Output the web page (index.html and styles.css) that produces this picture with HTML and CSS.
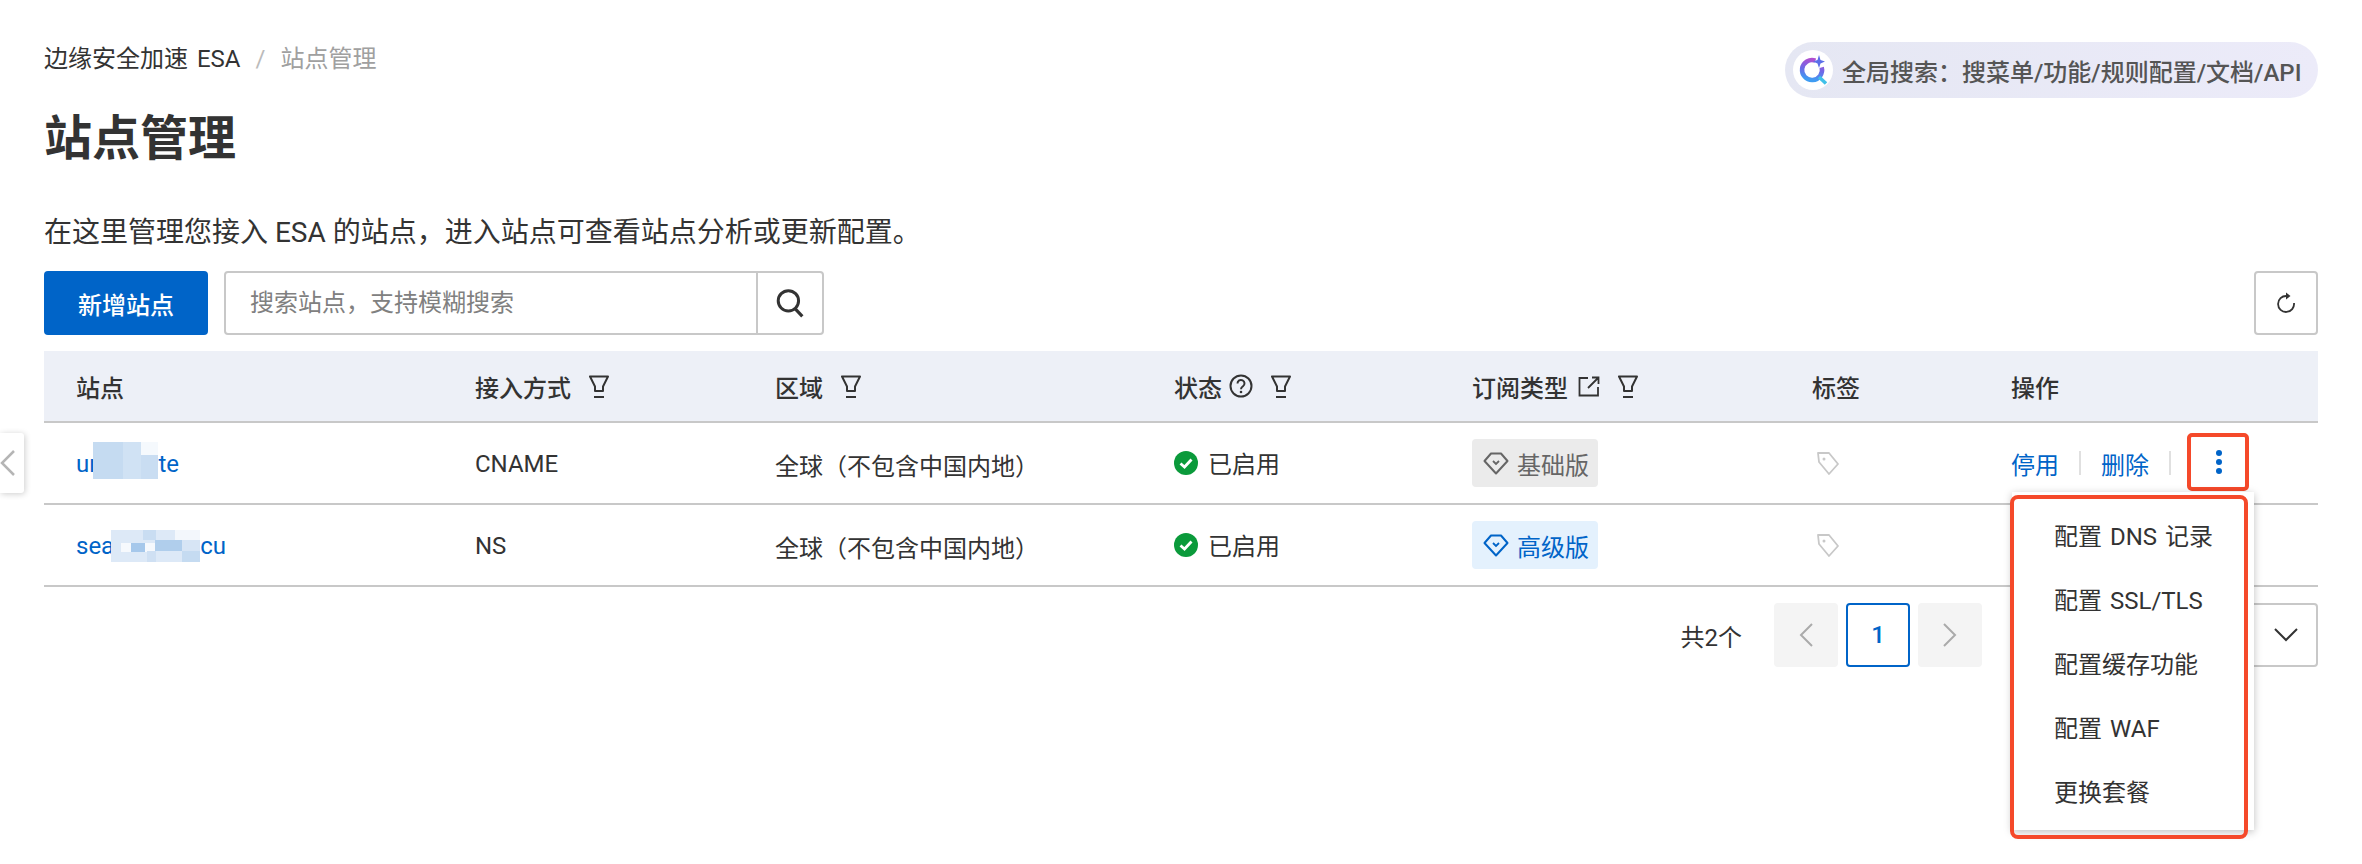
FILE: index.html
```html
<!DOCTYPE html>
<html>
	<head>
		<meta charset="utf-8">
		<title>站点管理</title>
		<link rel="stylesheet" href="styles.css">
	</head>
	<body>
		<svg class="sprite" xmlns="http://www.w3.org/2000/svg">
			<symbol id="i-filter" viewBox="0 0 20 23">
				<path d="M1 1.500h18l-5 10V16H6v-4.500z" fill="none" stroke="currentColor" stroke-width="2" stroke-linejoin="round"/>
				<path d="M5 22h10" fill="none" stroke="currentColor" stroke-width="2"/>
			</symbol>
			<symbol id="i-tag" viewBox="0 0 24 24">
				<path d="M2 2h11l9 11-9 10L3 11z" fill="none" stroke="currentColor" stroke-width="1.800" stroke-linejoin="round"/>
				<circle cx="8" cy="8" r="1.500" fill="currentColor"/>
			</symbol>
			<symbol id="i-gem" viewBox="0 0 26 23">
				<path d="M8 1.500h10l6.500 7.500L13 21.500 1.500 9z" fill="none" stroke="currentColor" stroke-width="2" stroke-linejoin="round"/>
				<path d="M10 9l3 3 3-3" fill="none" stroke="currentColor" stroke-width="1.800"/>
			</symbol>
			<symbol id="i-check" viewBox="0 0 24 24">
				<circle cx="12" cy="12" r="12" fill="#0b9a3b"/>
				<path d="M6.500 12.500l4 3.500 7-7.500" fill="none" stroke="#fff" stroke-width="2.800"/>
			</symbol>
		</svg>

		<div class="handle">
			<svg width="16" height="26" viewBox="0 0 16 26"><path d="M14 1L2 13l12 12" fill="none" stroke="#b5b5b5" stroke-width="2.500"/></svg>
		</div>

		<div class="page">
			<div class="topbar">
				<div class="crumbs">
					<span>边缘安全加速 ESA</span>
					<i>/</i>
					<span class="crumb-now">站点管理</span>
				</div>
				<div class="global-search">
					<span class="logo">
						<svg width="32" height="32" viewBox="0 0 32 32">
							<defs>
								<linearGradient id="ring" x1="0.700" y1="0" x2="0.500" y2="1">
									<stop offset="0" stop-color="#b04fd0"/>
									<stop offset="0.500" stop-color="#6f68e6"/>
									<stop offset="1" stop-color="#3f9cf2"/>
								</linearGradient>
							</defs>
							<path d="M18.400 6.600A10 10 0 1 0 24.700 13.400" fill="none" stroke="url(#ring)" stroke-width="4.500"/>
							<path d="M22 1l1.500 5 4.500 1.500-4.500 2L22 14l-1.500-4.500L16 7.500l4.500-1.500z" fill="#5b6ee8"/>
							<path d="M22 23l7 6.500" fill="none" stroke="#3fc0e8" stroke-width="3.500"/>
						</svg>
					</span>
					<span>全局搜索：搜菜单/功能/规则配置/文档/API</span>
				</div>
			</div>

			<h1>站点管理</h1>
			<p class="desc">在这里管理您接入 ESA 的站点，进入站点可查看站点分析或更新配置。</p>

			<div class="toolbar">
				<button class="btn-primary">新增站点</button>
				<div class="search">
					<input type="text" placeholder="搜索站点，支持模糊搜索">
					<button>
						<svg width="30" height="30" viewBox="0 0 28 28"><circle cx="12.500" cy="12" r="9.500" fill="none" stroke="#333" stroke-width="2.800"/><path d="M18.500 19l7 7.500" fill="none" stroke="#333" stroke-width="3"/></svg>
					</button>
				</div>
				<button class="btn-refresh">
					<svg width="20" height="22" viewBox="0 0 20 22"><path d="M10.500 4A8 8 0 1 0 18 11" fill="none" stroke="#333" stroke-width="1.800"/><path d="M10 0.500L14.500 4 10 7.500z" fill="#333"/></svg>
				</button>
			</div>

			<table class="sites">
				<thead>
					<tr>
						<th class="c-site">站点</th>
						<th class="c-mode"><span class="th-in">接入方式<svg class="ic-filter"><use href="#i-filter"/></svg></span></th>
						<th class="c-area"><span class="th-in">区域<svg class="ic-filter"><use href="#i-filter"/></svg></span></th>
						<th class="c-state">
							<span class="th-in">状态
								<svg class="ic-help" viewBox="0 0 24 24"><circle cx="12" cy="12" r="10.500" fill="none" stroke="currentColor" stroke-width="2"/><path d="M8.500 9.500a3.500 3.500 0 1 1 5.500 2.800c-1.300.9-2 1.500-2 3" fill="none" stroke="currentColor" stroke-width="2"/><circle cx="12" cy="18" r="1.300" fill="currentColor"/></svg>
								<svg class="ic-filter"><use href="#i-filter"/></svg>
							</span>
						</th>
						<th class="c-plan">
							<span class="th-in">订阅类型
								<svg class="ic-ext" viewBox="0 0 22 21"><path d="M10 2H1.500v17.500H20V11" fill="none" stroke="currentColor" stroke-width="1.800"/><path d="M10 12L20 2M14 1.500h6.500V8" fill="none" stroke="currentColor" stroke-width="1.800"/></svg>
								<svg class="ic-filter"><use href="#i-filter"/></svg>
							</span>
						</th>
						<th class="c-tag">标签</th>
						<th class="c-act">操作</th>
					</tr>
				</thead>
				<tbody>
					<tr>
						<td class="t"><a class="site-link" href="javascript:;">ur<svg class="mosaic m1" viewBox="0 0 65 37"><rect width="30" height="37" fill="#c5dbf1"/><rect x="30" width="18" height="37" fill="#d0e2f4"/><rect x="48" width="17" height="13" fill="#f5f9fd"/><rect x="48" y="13" width="17" height="24" fill="#c9ddf2"/></svg>te</a></td>
						<td class="t">CNAME</td>
						<td class="t">全球（不包含中国内地）</td>
						<td><span class="state"><svg class="ic-check"><use href="#i-check"/></svg>已启用</span></td>
						<td><span class="plan plan-base"><svg class="ic-gem"><use href="#i-gem"/></svg>基础版</span></td>
						<td><svg class="ic-tag"><use href="#i-tag"/></svg></td>
						<td>
							<div class="actions">
								<a href="javascript:;">停用</a>
								<i></i>
								<a href="javascript:;">删除</a>
								<i></i>
								<div class="more">
									<b></b><b></b><b></b>
									<div class="menu">
										<div class="menu-mark"></div>
										<div class="menu-item">配置 DNS 记录</div>
										<div class="menu-item">配置 SSL/TLS</div>
										<div class="menu-item">配置缓存功能</div>
										<div class="menu-item">配置 WAF</div>
										<div class="menu-item">更换套餐</div>
									</div>
								</div>
							</div>
						</td>
					</tr>
					<tr>
						<td class="t"><a class="site-link" href="javascript:;">sea<svg class="mosaic m2" viewBox="0 0 89 32"><rect width="89" height="32" fill="#dde9f7"/><rect x="32" width="13" height="10" fill="#c9ddf2"/><rect x="64" width="25" height="10" fill="#f3f7fc"/><rect x="10" y="13" width="10" height="9" fill="#f6f9fd"/><rect x="20" y="13" width="14" height="9" fill="#a6c8eb"/><rect x="34" y="13" width="10" height="9" fill="#f6f9fd"/><rect x="44" y="10" width="27" height="11" fill="#b0ceec"/><rect x="71" y="10" width="18" height="11" fill="#d7e5f5"/><rect x="71" y="21" width="18" height="11" fill="#c5dbf1"/><rect x="36" y="21" width="9" height="11" fill="#cfe0f3"/></svg>cu</a></td>
						<td class="t">NS</td>
						<td class="t">全球（不包含中国内地）</td>
						<td><span class="state"><svg class="ic-check"><use href="#i-check"/></svg>已启用</span></td>
						<td><span class="plan plan-pro"><svg class="ic-gem"><use href="#i-gem"/></svg>高级版</span></td>
						<td><svg class="ic-tag"><use href="#i-tag"/></svg></td>
						<td></td>
					</tr>
				</tbody>
			</table>

			<div class="pager">
				<span class="total">共2个</span>
				<span class="pg pg-off">
					<svg width="14" height="24" viewBox="0 0 14 24"><path d="M13 1L2 12l11 11" fill="none" stroke="#aaa" stroke-width="2"/></svg>
				</span>
				<span class="pg pg-on">1</span>
				<span class="pg pg-off">
					<svg width="14" height="24" viewBox="0 0 14 24"><path d="M1 1l11 11L1 23" fill="none" stroke="#aaa" stroke-width="2"/></svg>
				</span>
				<span class="size-select">
					<svg width="24" height="14" viewBox="0 0 24 14"><path d="M1 1l11 11L23 1" fill="none" stroke="#333" stroke-width="2"/></svg>
				</span>
			</div>
		</div>
	</body>
</html>
```

FILE: styles.css
```css
*{
	margin: 0;
	padding: 0;
	box-sizing: border-box;
}
html,body{
	height: 100%;
}
body{
	min-height: 864px;
	background: #fff;
	color: #333;
	font-family: Roboto, "Noto Sans CJK SC", sans-serif;
	font-size: 24px;
}
a{
	color: #0064c8;
	text-decoration: none;
}
button{
	font-family: inherit;
	cursor: pointer;
}
.sprite{
	display: none;
}
.handle{
	position: absolute;
	left: 0;
	top: 433px;
	width: 24px;
	height: 60px;
	display: flex;
	align-items: center;
	background: #fff;
	border-radius: 0 3px 3px 0;
	box-shadow: 1px 1px 6px rgba(0,0,0,.2);
}
.page{
	min-height: 864px;
	padding: 42px 44px 0;
}
.topbar{
	display: flex;
	justify-content: space-between;
	align-items: flex-start;
}
.crumbs{
	display: flex;
	margin-top: 1px;
	line-height: 32px;
	word-spacing: 3px;
}
.crumbs i{
	margin: 0 15px;
	font-style: normal;
	color: #bbb;
}
.crumb-now{
	color: #a0a0a0;
}
.global-search{
	display: flex;
	align-items: center;
	gap: 9px;
	width: 533px;
	height: 56px;
	padding-left: 8px;
	border-radius: 28px;
	background: linear-gradient(90deg,#e5e7f3,#ecebf9);
	color: #555;
	font-weight: 500;
}
.logo{
	display: flex;
	align-items: center;
	justify-content: center;
	width: 40px;
	height: 40px;
	border-radius: 50%;
	background: #fff;
}
h1{
	margin-top: 9px;
	font-size: 48px;
	line-height: 64px;
	font-weight: 700;
}
.desc{
	margin-top: 42px;
	font-size: 28px;
	line-height: 40px;
}
.toolbar{
	display: flex;
	margin-top: 18px;
}
.btn-primary{
	width: 164px;
	height: 64px;
	border: 0;
	border-radius: 4px;
	background: #0064c8;
	color: #fff;
	font-size: 24px;
	font-weight: 500;
}
.search{
	display: flex;
	width: 600px;
	height: 64px;
	margin-left: 16px;
	border: 2px solid #c8c8c8;
	border-radius: 4px;
}
.search input{
	flex: 1;
	min-width: 0;
	padding: 0 24px;
	border: 0;
	outline: 0;
	background: none;
	font-family: inherit;
	font-size: 24px;
}
.search input::placeholder{
	color: #808080;
}
.search button{
	display: flex;
	align-items: center;
	justify-content: center;
	width: 66px;
	border: 0;
	border-left: 2px solid #c8c8c8;
	background: none;
}
.btn-refresh{
	display: flex;
	align-items: center;
	justify-content: center;
	width: 64px;
	height: 64px;
	margin-left: auto;
	border: 2px solid #c8c8c8;
	border-radius: 4px;
	background: #fff;
}
.sites{
	width: 100%;
	margin-top: 16px;
	border-collapse: separate;
	border-spacing: 0;
	table-layout: fixed;
}
.sites th{
	height: 72px;
	padding-left: 32px;
	background: #edf0f7;
	border-bottom: 2px solid #c8c8c8;
	text-align: left;
	font-weight: 500;
}
.sites td{
	height: 82px;
	padding-left: 32px;
	border-bottom: 2px solid #c8c8c8;
}
.sites td.t{
	padding-top: 2px;
}
.c-site{ width: 399px; }
.c-mode{ width: 300px; }
.c-area{ width: 399px; }
.c-state{ width: 298px; }
.c-plan{ width: 340px; }
.c-tag{ width: 199px; }
.th-in{
	display: inline-flex;
	align-items: center;
	white-space: nowrap;
}
.ic-filter{
	width: 20px;
	height: 23px;
	margin-left: 18px;
}
.ic-help{
	width: 24px;
	height: 24px;
	margin-left: 7px;
}
.ic-ext{
	width: 22px;
	height: 21px;
	margin-left: 10px;
}
.site-link{
	display: inline-flex;
	align-items: center;
}
.mosaic{
	flex: none;
}
.m1{
	width: 65px;
	height: 37px;
	margin-top: -8px;
	margin-left: -4px;
}
.m2{
	width: 89px;
	height: 32px;
	margin-left: -3px;
}
.state{
	display: inline-flex;
	align-items: center;
	gap: 10px;
}
.ic-check{
	width: 24px;
	height: 24px;
}
.plan{
	display: inline-flex;
	align-items: center;
	gap: 8px;
	width: 126px;
	height: 48px;
	padding-left: 11px;
	border-radius: 4px;
	vertical-align: middle;
}
.ic-gem{
	width: 26px;
	height: 23px;
}
.plan-base{
	background: #ebebeb;
	color: #666;
}
.plan-pro{
	background: #e4f1fd;
	color: #0064c8;
}
.ic-tag{
	display: block;
	width: 24px;
	height: 24px;
	margin-left: 4px;
	color: #c8c8c8;
}
.actions{
	display: flex;
	align-items: center;
}
.actions i{
	width: 2px;
	height: 24px;
	margin: 0 20px;
	background: #e0e0e0;
}
.more{
	position: relative;
	display: flex;
	flex-direction: column;
	align-items: center;
	justify-content: center;
	gap: 3px;
	flex: none;
	width: 62px;
	height: 58px;
	margin: -2px 0 0 -4px;
	padding-left: 2px;
	border: 4px solid #f5492a;
	border-radius: 5px;
}
.more b{
	width: 6px;
	height: 6px;
	border-radius: 50%;
	background: #0064c8;
}
.menu{
	position: absolute;
	left: -179px;
	top: 55px;
	z-index: 5;
	width: 242px;
	height: 338px;
	padding-top: 13px;
	background: #fff;
	box-shadow: 0 2px 8px rgba(0,0,0,.25);
}
.menu-mark{
	position: absolute;
	left: -2px;
	top: 3px;
	width: 238px;
	height: 344px;
	border: 4px solid #f5492a;
	border-radius: 8px;
}
.menu-item{
	height: 64px;
	padding-left: 42px;
	line-height: 64px;
	word-spacing: 2px;
	white-space: nowrap;
}
.pager{
	display: flex;
	align-items: center;
	justify-content: flex-end;
	gap: 8px;
	margin-top: 16px;
}
.total{
	margin-right: 24px;
}
.pg{
	display: flex;
	align-items: center;
	justify-content: center;
	width: 64px;
	height: 64px;
	border-radius: 4px;
}
.pg-off{
	background: #f4f4f4;
}
.pg-on{
	border: 2px solid #0064c8;
	color: #0064c8;
	font-weight: 500;
}
.size-select{
	display: flex;
	align-items: center;
	justify-content: flex-end;
	width: 288px;
	height: 64px;
	margin-left: 40px;
	padding-right: 18px;
	border: 2px solid #c8c8c8;
	border-radius: 4px;
}
```
